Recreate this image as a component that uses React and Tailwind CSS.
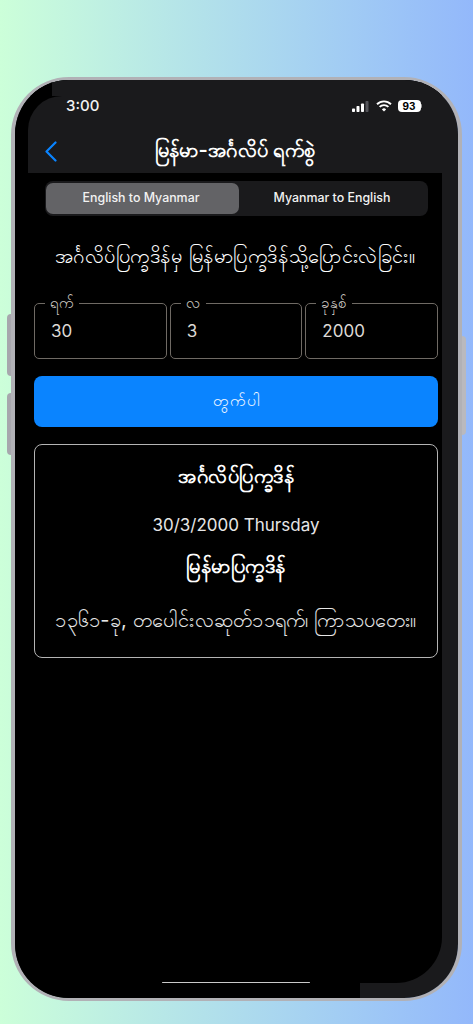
import React from 'react';

const sans = 'font-["Inter","Liberation_Sans",sans-serif]';

const dateFields = [
  { label: 'ရက်', value: '30' },
  { label: 'လ', value: '3' },
  { label: 'ခုနှစ်', value: '2000' },
];

const StatusBar = () => (
  <div className="flex h-[36px] items-start justify-between pl-[38px] pr-[20px] pt-[1px]">
    <span className={`${sans} text-[15px] leading-[18px] font-medium text-[#f2f2f2]`}>3:00</span>
    <div className="flex items-center gap-[6px] pt-[3px]">
      <svg width="18" height="11" viewBox="0 0 18 11">
        <rect x="0" y="7.5" width="3" height="3.5" rx="0.8" fill="#fff" />
        <rect x="4.5" y="5" width="3" height="6" rx="0.8" fill="#fff" />
        <rect x="9" y="2.5" width="3" height="8.5" rx="0.8" fill="#fff" />
        <rect x="13.5" y="0" width="3" height="11" rx="0.8" fill="#55555a" />
      </svg>
      <svg width="16" height="12" viewBox="0 0 16 12" fill="none" stroke="#fff" strokeWidth="1.9">
        <path d="M1 4.2a10 10 0 0 1 14 0" />
        <path d="M3.6 6.9a6.3 6.3 0 0 1 8.8 0" />
        <path d="M8 11.6 5.9 9.4a3 3 0 0 1 4.2 0Z" fill="#fff" stroke="none" />
      </svg>
      <div className="flex items-center">
        <div className={`${sans} flex h-[12px] w-[23px] items-center justify-center rounded-[4px] bg-white text-[10px] leading-none font-bold text-black`}>93</div>
        <div className="h-[4px] w-[1.5px] rounded-r-sm bg-[#9a9a9a]" />
      </div>
    </div>
  </div>
);

const NavBar = () => (
  <div className="flex h-[41px] items-center pb-[2px] pl-[17px]">
    <svg width="12" height="21" viewBox="0 0 12 21" fill="none" stroke="#0a84ff" strokeWidth="2.2" strokeLinecap="round" strokeLinejoin="round">
      <path d="M10.5 1.5 1.5 10.5l9 9" />
    </svg>
    <h1 className={`${sans} flex-1 pb-[4px] pr-[29px] text-center text-[20px] leading-[30px] font-semibold tracking-[0.25px] text-white`}>မြန်မာ-အင်္ဂလိပ် ရက်စွဲ</h1>
  </div>
);

const SegmentedControl = () => (
  <div className={`${sans} mx-[17px] mt-[8px] flex h-[35px] w-[383px] items-center rounded-[8px] bg-[#1a1a1c] pl-[1px] text-[12.4px] font-medium text-[#f2f2f2]`}>
    <div className="flex h-[31px] w-[193px] items-center justify-center rounded-[7px] bg-[#636366] pr-[3px]">English to Myanmar</div>
    <div className="flex flex-1 items-center justify-center pr-[3px]">Myanmar to English</div>
  </div>
);

const DateField = ({ label, value }) => (
  <fieldset className="h-[63px] flex-1 rounded-[5px] border border-[#6f6a64] pl-[11px]">
    <legend className="ml-[-1px] px-[5px] text-[15px] leading-[14px] text-[#cfcac4]">{label}</legend>
    <div className="pl-[5px] pt-[10px] text-[17px] leading-[22px] text-[#dcd9d5]">{value}</div>
  </fieldset>
);

export default function App() {
  return (
    <div className="h-[1024px] w-[473px] overflow-hidden bg-gradient-to-r from-[#ccffd9] to-[#93b8fb] pl-[11px] pt-[77px]">
      <div className="relative h-[924px] w-[451px] rounded-[58px] border-x-4 border-y-[3px] border-[#b1b1b6]">
        {/* side buttons */}
        <div className="absolute -left-[8px] top-[234px] h-[62px] w-[4px] rounded-l-sm bg-[#a7a7ad]" />
        <div className="absolute -left-[8px] top-[313px] h-[62px] w-[4px] rounded-l-sm bg-[#a7a7ad]" />
        <div className="absolute -right-[8px] top-[256px] h-[99px] w-[4px] rounded-r-sm bg-[#b9b9be]" />

        <div className={`${sans} flex h-full flex-col overflow-hidden rounded-[54px] bg-[#1a1a1c]`}>
          <div className="flex min-h-0 flex-1">
            <div className="w-[13px] bg-black" />
            <main className="flex w-[414px] flex-col rounded-br-[46px] bg-black">
              <div className="flex h-[16px]">
                <div className="w-[24px] bg-black" />
                <div className="flex-1 bg-[#1a1a1c]" />
              </div>
              <header className="h-[77px] rounded-tl-[34px] bg-[#1a1a1c]">
                <StatusBar />
                <NavBar />
              </header>
              <SegmentedControl />

              <p className="mt-[25px] text-center text-[20px] leading-[30px] tracking-[0.55px] text-white">အင်္ဂလိပ်ပြက္ခဒိန်မှ မြန်မာပြက္ခဒိန်သို့ပြောင်းလဲခြင်း။</p>

              <div className="ml-[6px] mt-[25px] flex w-[404px] gap-[3px]">
                {dateFields.map((f) => (
                  <DateField key={f.label} label={f.label} value={f.value} />
                ))}
              </div>

              <button className="ml-[6px] mt-[17px] h-[51px] w-[404px] rounded-[8px] bg-[#0a84ff] pb-[4px] text-[16px] text-[#f2f7ff]">တွက်ပါ</button>

              <section className="ml-[6px] mt-[17px] flex h-[214px] w-[404px] flex-col items-center rounded-[8px] border border-[#b4b4b4] pt-[16px] text-[#e6e6e6]">
                <h2 className="h-[30px] text-[20px] leading-[30px] font-semibold tracking-[0.5px] text-white">အင်္ဂလိပ်ပြက္ခဒိန်</h2>
                <p className="mt-[22px] h-[24px] text-[17px] leading-[24px]">30/3/2000 Thursday</p>
                <h2 className="mt-[14px] h-[30px] text-[20px] leading-[30px] font-semibold tracking-[0.5px] text-white">မြန်မာပြက္ခဒိန်</h2>
                <p className="mt-[24px] h-[30px] text-[20px] leading-[30px] tracking-[0.25px]">၁၃၆၁-ခု, တပေါင်းလဆုတ်၁၁ရက်၊ ကြာသပတေး။</p>
              </section>

              <div className="mx-auto mt-auto h-[1.5px] w-[148px] translate-x-[1px] rounded-full bg-[#c9c9c9]" />
            </main>
          </div>
          <div className="flex h-[15px]">
            <div className="w-[345px] bg-black" />
          </div>
        </div>
      </div>
    </div>
  );
}
